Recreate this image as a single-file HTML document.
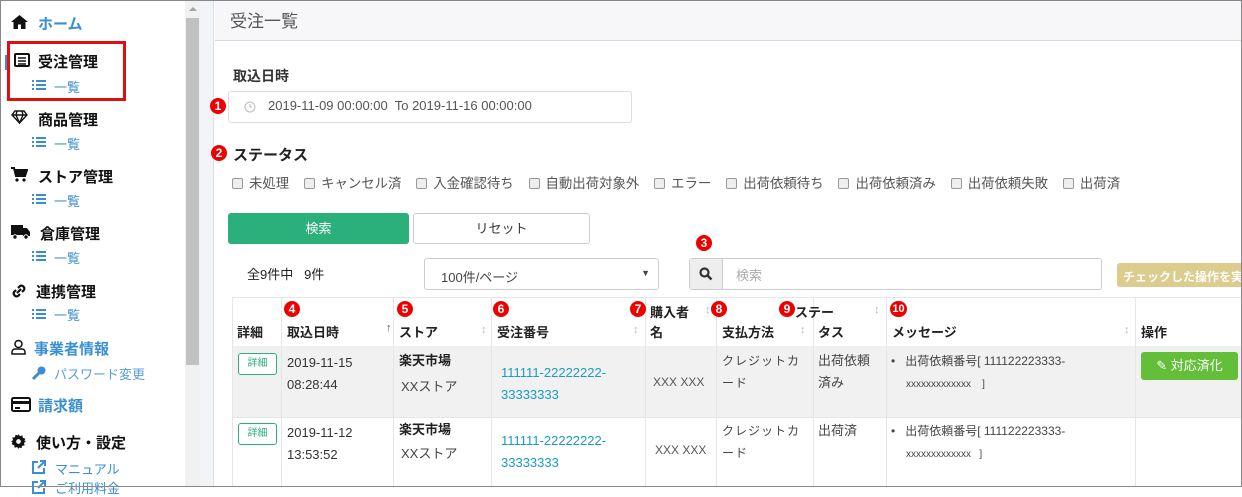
<!DOCTYPE html><html><head><meta charset="utf-8"><style>
*{box-sizing:border-box;margin:0;padding:0}
body{width:1242px;height:487px;overflow:hidden;position:relative;background:#fff;font-family:"Liberation Sans","Noto Sans CJK JP",sans-serif;color:#333}
.a{position:absolute;white-space:nowrap}
.sb{font-size:15px;font-weight:bold;color:#111}
.bl{color:#3a8fd0}
.sub{font-size:13px;color:#3a8fd0}
.rc{position:absolute;width:16px;height:16px;border-radius:8px;background:#e00;color:#fff;font-size:12px;font-weight:bold;text-align:center;line-height:16px}
.cb{display:inline-block;width:11px;height:11px;border:1px solid #999;border-radius:2px;background:#eee;vertical-align:-1px;margin-right:6px}
.th{font-size:13px;font-weight:bold;color:#222}
.vl{position:absolute;top:297px;bottom:0;width:1px;background:#e6e6e6}
.ar{color:#bbb;font-size:11px}
</style></head><body>
<div class="a" style="left:0;top:0;width:1242px;height:487px;border:1px solid #888;z-index:9;pointer-events:none"></div>
<div class="a" style="left:185px;top:0;width:15px;height:487px;background:#f1f1f1"></div>
<div class="a" style="left:186px;top:18px;width:13px;height:347px;background:#c1c1c1"></div>
<div class="a" style="left:189px;top:7px;width:0;height:0;border:4px solid transparent;border-bottom:4px solid #a3a3a3;border-top:0"></div>
<div class="a" style="left:200px;top:0;width:14px;height:487px;background:#f2f4f8;border-right:1px solid #dcdfe6"></div>
<svg class="a" style="left:11px;top:15px" width="17" height="14" viewBox="0 0 17 14"><path d="M8.5 0L0 7h2.5v7h4.5V9.5h3V14h4.5V7H17z" fill="#111"/></svg>
<div class="a sb bl" style="left:38px;top:13px">ホーム</div>
<div class="a" style="left:7px;top:41px;width:119px;height:60px;border:3px solid #e01010"></div>
<div class="a" style="left:5px;top:55px;width:2px;height:15px;background:#3a8fd0"></div>
<svg class="a" style="left:14px;top:53px" width="16" height="14"><rect x="1" y="1" width="14" height="12" rx="1" fill="none" stroke="#111" stroke-width="2"/><path d="M4 5h8M4 8h8M4 11h8" stroke="#111" stroke-width="1.5"/></svg>
<div class="a sb" style="left:38px;top:51px">受注管理</div>
<svg class="a" style="left:32px;top:80px" width="14" height="11"><path d="M0 1h2M4 1h10M0 5h2M4 5h10M0 9h2M4 9h10" stroke="#3a8fd0" stroke-width="2"/></svg>
<div class="a sub" style="left:54px;top:77px">一覧</div>
<svg class="a" style="left:11px;top:110px" width="17" height="14" viewBox="0 0 17 14"><path d="M4 1h9l3 4-7.5 8L1 5z M1 5h15 M6 1l-1 4 3.5 8 3.5-8-1-4" fill="none" stroke="#111" stroke-width="1.4"/></svg>
<div class="a sb" style="left:38px;top:109px">商品管理</div>
<svg class="a" style="left:32px;top:137px" width="14" height="11"><path d="M0 1h2M4 1h10M0 5h2M4 5h10M0 9h2M4 9h10" stroke="#3a8fd0" stroke-width="2"/></svg>
<div class="a sub" style="left:54px;top:134px">一覧</div>
<svg class="a" style="left:11px;top:167px" width="17" height="15"><path d="M0 1h3l2 8h9l2-6H4" fill="#111" stroke="#111" stroke-width="2"/><circle cx="6" cy="13" r="1.6" fill="#111"/><circle cx="13" cy="13" r="1.6" fill="#111"/></svg>
<div class="a sb" style="left:38px;top:166px">ストア管理</div>
<svg class="a" style="left:32px;top:194px" width="14" height="11"><path d="M0 1h2M4 1h10M0 5h2M4 5h10M0 9h2M4 9h10" stroke="#3a8fd0" stroke-width="2"/></svg>
<div class="a sub" style="left:54px;top:191px">一覧</div>
<svg class="a" style="left:11px;top:225px" width="20" height="15"><rect x="0" y="0" width="12" height="10" fill="#111"/><path d="M12 3h4l3 4v4h-7z" fill="#111"/><circle cx="4" cy="12" r="2.2" fill="#111" stroke="#fff"/><circle cx="15" cy="12" r="2.2" fill="#111" stroke="#fff"/></svg>
<div class="a sb" style="left:40px;top:223px">倉庫管理</div>
<svg class="a" style="left:32px;top:251px" width="14" height="11"><path d="M0 1h2M4 1h10M0 5h2M4 5h10M0 9h2M4 9h10" stroke="#3a8fd0" stroke-width="2"/></svg>
<div class="a sub" style="left:54px;top:248px">一覧</div>
<svg class="a" style="left:11px;top:283px" width="16" height="16"><path d="M7 5l2-2a3 3 0 0 1 4 4l-2 2M9 11l-2 2a3 3 0 0 1-4-4l2-2M6 10l4-4" fill="none" stroke="#111" stroke-width="2.2"/></svg>
<div class="a sb" style="left:36px;top:281px">連携管理</div>
<svg class="a" style="left:32px;top:309px" width="14" height="11"><path d="M0 1h2M4 1h10M0 5h2M4 5h10M0 9h2M4 9h10" stroke="#3a8fd0" stroke-width="2"/></svg>
<div class="a sub" style="left:54px;top:305px">一覧</div>
<svg class="a" style="left:11px;top:339px" width="15" height="16"><circle cx="7.5" cy="5" r="3.5" fill="none" stroke="#111" stroke-width="1.5"/><path d="M1 15v-2a3 3 0 0 1 3-3h7a3 3 0 0 1 3 3v2z" fill="none" stroke="#111" stroke-width="1.5"/></svg>
<div class="a sb bl" style="left:34px;top:338px">事業者情報</div>
<svg class="a" style="left:32px;top:366px" width="14" height="14"><circle cx="9.5" cy="4.5" r="4" fill="#3a8fd0"/><path d="M7 7L1 13" stroke="#3a8fd0" stroke-width="3"/></svg>
<div class="a sub" style="left:54px;top:364px;color:#5aa0d8">パスワード変更</div>
<svg class="a" style="left:11px;top:397px" width="20" height="15"><rect x="1" y="1" width="18" height="13" rx="1.5" fill="none" stroke="#111" stroke-width="2"/><rect x="1" y="4" width="18" height="3" fill="#111"/><rect x="4" y="10" width="5" height="2" fill="#111"/></svg>
<div class="a sb bl" style="left:38px;top:395px">請求額</div>
<svg class="a" style="left:11px;top:434px" width="15" height="15" viewBox="0 0 16 16"><path d="M8 0l1.5 2.2 2.6-.8.5 2.7 2.6.8-.8 2.6L16 8l-2.2 1.5.8 2.6-2.7.5-.8 2.6-2.6-.8L8 16l-1.5-2.2-2.6.8-.5-2.7-2.6-.8.8-2.6L0 8l2.2-1.5-.8-2.6 2.7-.5.8-2.6 2.6.8z" fill="#111"/><circle cx="8" cy="8" r="2.5" fill="#fff"/></svg>
<div class="a sb" style="left:36px;top:432px">使い方・設定</div>
<svg class="a" style="left:32px;top:460px" width="14" height="14"><path d="M6 2H1v11h11V8M8 1h5v5M13 1L6 8" fill="none" stroke="#3a8fd0" stroke-width="2"/></svg>
<div class="a sub" style="left:55px;top:459px">マニュアル</div>
<svg class="a" style="left:32px;top:480px" width="14" height="14"><path d="M6 2H1v11h11V8M8 1h5v5M13 1L6 8" fill="none" stroke="#3a8fd0" stroke-width="2"/></svg>
<div class="a sub" style="left:55px;top:478px">ご利用料金</div>
<div class="a" style="left:215px;top:0;width:1027px;height:41px;background:#f7f7f9;border-bottom:1px solid #d8d8dc"></div>
<div class="a" style="left:230px;top:7px;font-size:17px;color:#555">受注一覧</div>
<div class="a" style="left:233px;top:66px;font-size:14px;font-weight:bold;color:#333">取込日時</div>
<div class="rc" style="left:210px;top:98px">1</div>
<div class="a" style="left:228px;top:91px;width:404px;height:32px;border:1px solid #ddd;border-radius:3px"></div>
<svg class="a" style="left:244px;top:101px" width="12" height="12"><circle cx="6" cy="6" r="5" fill="none" stroke="#bbb"/><path d="M6 3v3h2" stroke="#bbb" fill="none"/></svg>
<div class="a" style="left:268px;top:98px;font-size:13px;color:#555">2019-11-09 00:00:00&nbsp; To 2019-11-16 00:00:00</div>
<div class="rc" style="left:211px;top:145px">2</div>
<div class="a" style="left:233px;top:144px;font-size:15px;font-weight:bold;color:#222">ステータス</div>
<div class="a" style="left:232px;top:172px;font-size:13.4px;color:#555">
<span class="cb"></span>未処理&nbsp;&nbsp;&nbsp; <span class="cb"></span>キャンセル済&nbsp;&nbsp;&nbsp; <span class="cb"></span>入金確認待ち&nbsp;&nbsp;&nbsp; <span class="cb"></span>自動出荷対象外&nbsp;&nbsp;&nbsp; <span class="cb"></span>エラー&nbsp;&nbsp;&nbsp; <span class="cb"></span>出荷依頼待ち&nbsp;&nbsp;&nbsp; <span class="cb"></span>出荷依頼済み&nbsp;&nbsp;&nbsp; <span class="cb"></span>出荷依頼失敗&nbsp;&nbsp;&nbsp; <span class="cb"></span>出荷済</div>
<div class="a" style="left:228px;top:213px;width:181px;height:31px;background:#2bb07c;border-radius:3px;color:#fff;font-size:13px;text-align:center;line-height:31px">検索</div>
<div class="a" style="left:413px;top:213px;width:177px;height:31px;border:1px solid #ccc;border-radius:3px;color:#333;font-size:13px;text-align:center;line-height:29px">リセット</div>
<div class="rc" style="left:696px;top:235px">3</div>
<div class="a" style="left:247px;top:264px;font-size:13px;color:#222">全9件中&nbsp;&nbsp; 9件</div>
<div class="a" style="left:424px;top:258px;width:235px;height:32px;border:1px solid #ccc;border-radius:3px;font-size:13px;color:#444;padding:8px 0 0 16px">100件/ページ<span style="position:absolute;right:8px;top:9px;font-size:9px">▼</span></div>
<div class="a" style="left:689px;top:258px;width:413px;height:32px;border:1px solid #ccc;border-radius:3px"></div>
<div class="a" style="left:690px;top:259px;width:33px;height:30px;background:#eee;border-right:1px solid #ccc"></div>
<svg class="a" style="left:699px;top:267px" width="14" height="14"><circle cx="5.5" cy="5.5" r="4" fill="none" stroke="#333" stroke-width="2.2"/><path d="M8.5 8.5l4 4" stroke="#333" stroke-width="2.5"/></svg>
<div class="a" style="left:736px;top:265px;font-size:13px;color:#aaa">検索</div>
<div class="a" style="left:1117px;top:263px;width:130px;height:24px;background:#dccd8e;border-radius:3px;color:#fff;font-size:12px;font-weight:bold;padding:5px 0 0 6px">チェックした操作を実行</div>
<div class="a" style="left:232px;top:297px;width:1010px;height:1px;background:#e6e6e6"></div>
<div class="a" style="left:232px;top:346px;width:1010px;height:71px;background:#f1f1f1"></div>
<div class="a" style="left:232px;top:417px;width:1010px;height:1px;background:#e6e6e6"></div>
<div class="vl" style="left:232px"></div><div class="vl" style="left:281px"></div><div class="vl" style="left:393px"></div><div class="vl" style="left:491px"></div><div class="vl" style="left:645px"></div><div class="vl" style="left:716px"></div><div class="vl" style="left:813px"></div><div class="vl" style="left:886px"></div><div class="vl" style="left:1135px"></div>
<div class="a th" style="left:237px;top:322px">詳細</div>
<div class="rc" style="left:284px;top:301px">4</div><div class="a th" style="left:287px;top:322px">取込日時</div><div class="a ar" style="left:386px;top:322px;color:#555">↑</div>
<div class="rc" style="left:397px;top:301px">5</div><div class="a th" style="left:399px;top:322px">ストア</div><div class="a ar" style="left:481px;top:324px">↕</div>
<div class="rc" style="left:493px;top:301px">6</div><div class="a th" style="left:497px;top:322px">受注番号</div><div class="a ar" style="left:633px;top:324px">↕</div>
<div class="rc" style="left:630px;top:301px">7</div><div class="a th" style="left:650px;top:302px">購入者</div><div class="a th" style="left:650px;top:322px">名</div><div class="a ar" style="left:705px;top:304px">↕</div>
<div class="rc" style="left:711px;top:301px">8</div><div class="a th" style="left:722px;top:322px">支払方法</div><div class="a ar" style="left:800px;top:324px">↕</div>
<div class="rc" style="left:779px;top:301px">9</div><div class="a th" style="left:795px;top:302px">ステー</div><div class="a th" style="left:818px;top:322px">タス</div><div class="a ar" style="left:874px;top:304px">↕</div>
<div class="rc" style="left:890px;top:301px;width:17px;font-size:11px">10</div><div class="a th" style="left:892px;top:322px">メッセージ</div><div class="a ar" style="left:1124px;top:324px">↕</div>
<div class="a th" style="left:1141px;top:322px">操作</div>
<div class="a" style="left:238px;top:353px;width:39px;height:22px;border:1px solid #2bb07c;border-radius:3px;font-size:10px;color:#2bb07c;text-align:center;line-height:20px;background:#fff">詳細</div>
<div class="a" style="left:287px;top:352px;font-size:13px;line-height:22px;color:#333">2019-11-15<br>08:28:44</div>
<div class="a" style="left:399px;top:350px;font-size:13px;font-weight:bold;color:#222">楽天市場</div>
<div class="a" style="left:401px;top:376px;font-size:13px;color:#444">XXストア</div>
<div class="a" style="left:501px;top:362px;font-size:13px;line-height:22px;color:#1a9bc7">111111-22222222-<br>33333333</div>
<div class="a" style="left:653px;top:375px;font-size:12px;color:#555">XXX XXX</div>
<div class="a" style="left:722px;top:350px;font-size:12px;line-height:22px;color:#444;letter-spacing:1px">クレジットカ<br>ード</div>
<div class="a" style="left:818px;top:350px;font-size:13px;line-height:22px;color:#444">出荷依頼<br>済み</div>
<div class="a" style="left:891px;top:350px;font-size:12px;line-height:22px;color:#444">•&nbsp;&nbsp;&nbsp;出荷依頼番号[ 111122223333-<br><span style="font-size:10px;padding-left:15px">xxxxxxxxxxxxx&nbsp;&nbsp;&nbsp; ]</span></div>
<div class="a" style="left:1141px;top:352px;width:97px;height:28px;background:#63bf3a;border-radius:3px;color:#fff;font-size:13px;text-align:center;line-height:28px">✎ 対応済化</div>
<div class="a" style="left:238px;top:423px;width:39px;height:22px;border:1px solid #2bb07c;border-radius:3px;font-size:10px;color:#2bb07c;text-align:center;line-height:20px">詳細</div>
<div class="a" style="left:287px;top:422px;font-size:13px;line-height:22px;color:#333">2019-11-12<br>13:53:52</div>
<div class="a" style="left:399px;top:419px;font-size:13px;font-weight:bold;color:#222">楽天市場</div>
<div class="a" style="left:401px;top:443px;font-size:13px;color:#444">XXストア</div>
<div class="a" style="left:501px;top:430px;font-size:13px;line-height:22px;color:#1a9bc7">111111-22222222-<br>33333333</div>
<div class="a" style="left:655px;top:443px;font-size:12px;color:#555">XXX XXX</div>
<div class="a" style="left:722px;top:420px;font-size:12px;line-height:22px;color:#444;letter-spacing:1px">クレジットカ<br>ード</div>
<div class="a" style="left:818px;top:420px;font-size:13px;color:#444">出荷済</div>
<div class="a" style="left:891px;top:420px;font-size:12px;line-height:22px;color:#444">•&nbsp;&nbsp;&nbsp;出荷依頼番号[ 111122223333-<br><span style="font-size:10px;padding-left:15px">xxxxxxxxxxxxx&nbsp;&nbsp; ]</span></div>
</body></html>
